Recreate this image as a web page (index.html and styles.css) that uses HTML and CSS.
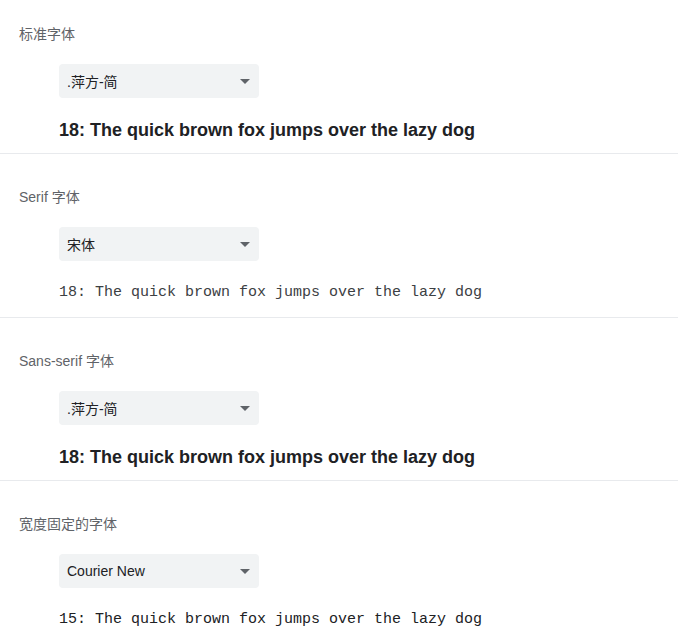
FILE: index.html
```html
<!DOCTYPE html>
<html lang="zh-CN">
<head>
<meta charset="utf-8">
<link rel="stylesheet" href="styles.css">
</head>
<body>
<div class="settings">
  <section class="section first">
    <div class="label">标准字体</div>
    <div class="body">
      <div class="select"><span class="select-text">.萍方-简</span><span class="arrow"></span></div>
      <div class="sample sample-sans">18: The quick brown fox jumps over the lazy dog</div>
    </div>
  </section>
  <section class="section serif">
    <div class="label">Serif 字体</div>
    <div class="body">
      <div class="select"><span class="select-text">宋体</span><span class="arrow"></span></div>
      <div class="sample sample-serif">18: The quick brown fox jumps over the lazy dog</div>
    </div>
  </section>
  <section class="section">
    <div class="label">Sans-serif 字体</div>
    <div class="body">
      <div class="select"><span class="select-text">.萍方-简</span><span class="arrow"></span></div>
      <div class="sample sample-sans">18: The quick brown fox jumps over the lazy dog</div>
    </div>
  </section>
  <section class="section last">
    <div class="label">宽度固定的字体</div>
    <div class="body">
      <div class="select"><span class="select-text">Courier New</span><span class="arrow"></span></div>
      <div class="sample sample-mono">15: The quick brown fox jumps over the lazy dog</div>
    </div>
  </section>
</div>
</body>
</html>
```
FILE: styles.css
```css
html, body {
  margin: 0;
  padding: 0;
  background: #ffffff;
}
body {
  font-family: "Liberation Sans", "Noto Sans CJK SC", sans-serif;
  color: #202124;
}
.settings {
  display: flex;
  flex-direction: column;
}
.section {
  padding: 33px 0 11px 19px;
  border-bottom: 1px solid #e8eaed;
  display: flex;
  flex-direction: column;
  gap: 20px;
}
.section.first {
  padding-top: 24px;
}
.section.serif {
  padding-bottom: 12px;
}
.section.last {
  border-bottom: none;
}
.label {
  font-size: 14px;
  line-height: 20px;
  color: #5f6368;
}
.body {
  padding-left: 40px;
  display: flex;
  flex-direction: column;
  gap: 20px;
}
.select {
  width: 200px;
  height: 34px;
  box-sizing: border-box;
  background: #f1f3f4;
  border-radius: 4px;
  padding: 0 9px 0 8px;
  display: flex;
  align-items: center;
  justify-content: space-between;
  font-size: 14px;
  color: #202124;
}
.arrow {
  width: 0;
  height: 0;
  border-left: 5px solid transparent;
  border-right: 5px solid transparent;
  border-top: 5px solid #5f6368;
}
.sample {
  line-height: 24px;
  white-space: nowrap;
}
.sample-sans {
  font-size: 18px;
  font-weight: bold;
}
.sample-serif {
  font-family: "Liberation Mono", "Noto Sans CJK SC", monospace;
  font-size: 15px;
  color: #3c4043;
}
.sample-mono {
  font-family: "Liberation Mono", monospace;
  font-size: 15px;
}
```
